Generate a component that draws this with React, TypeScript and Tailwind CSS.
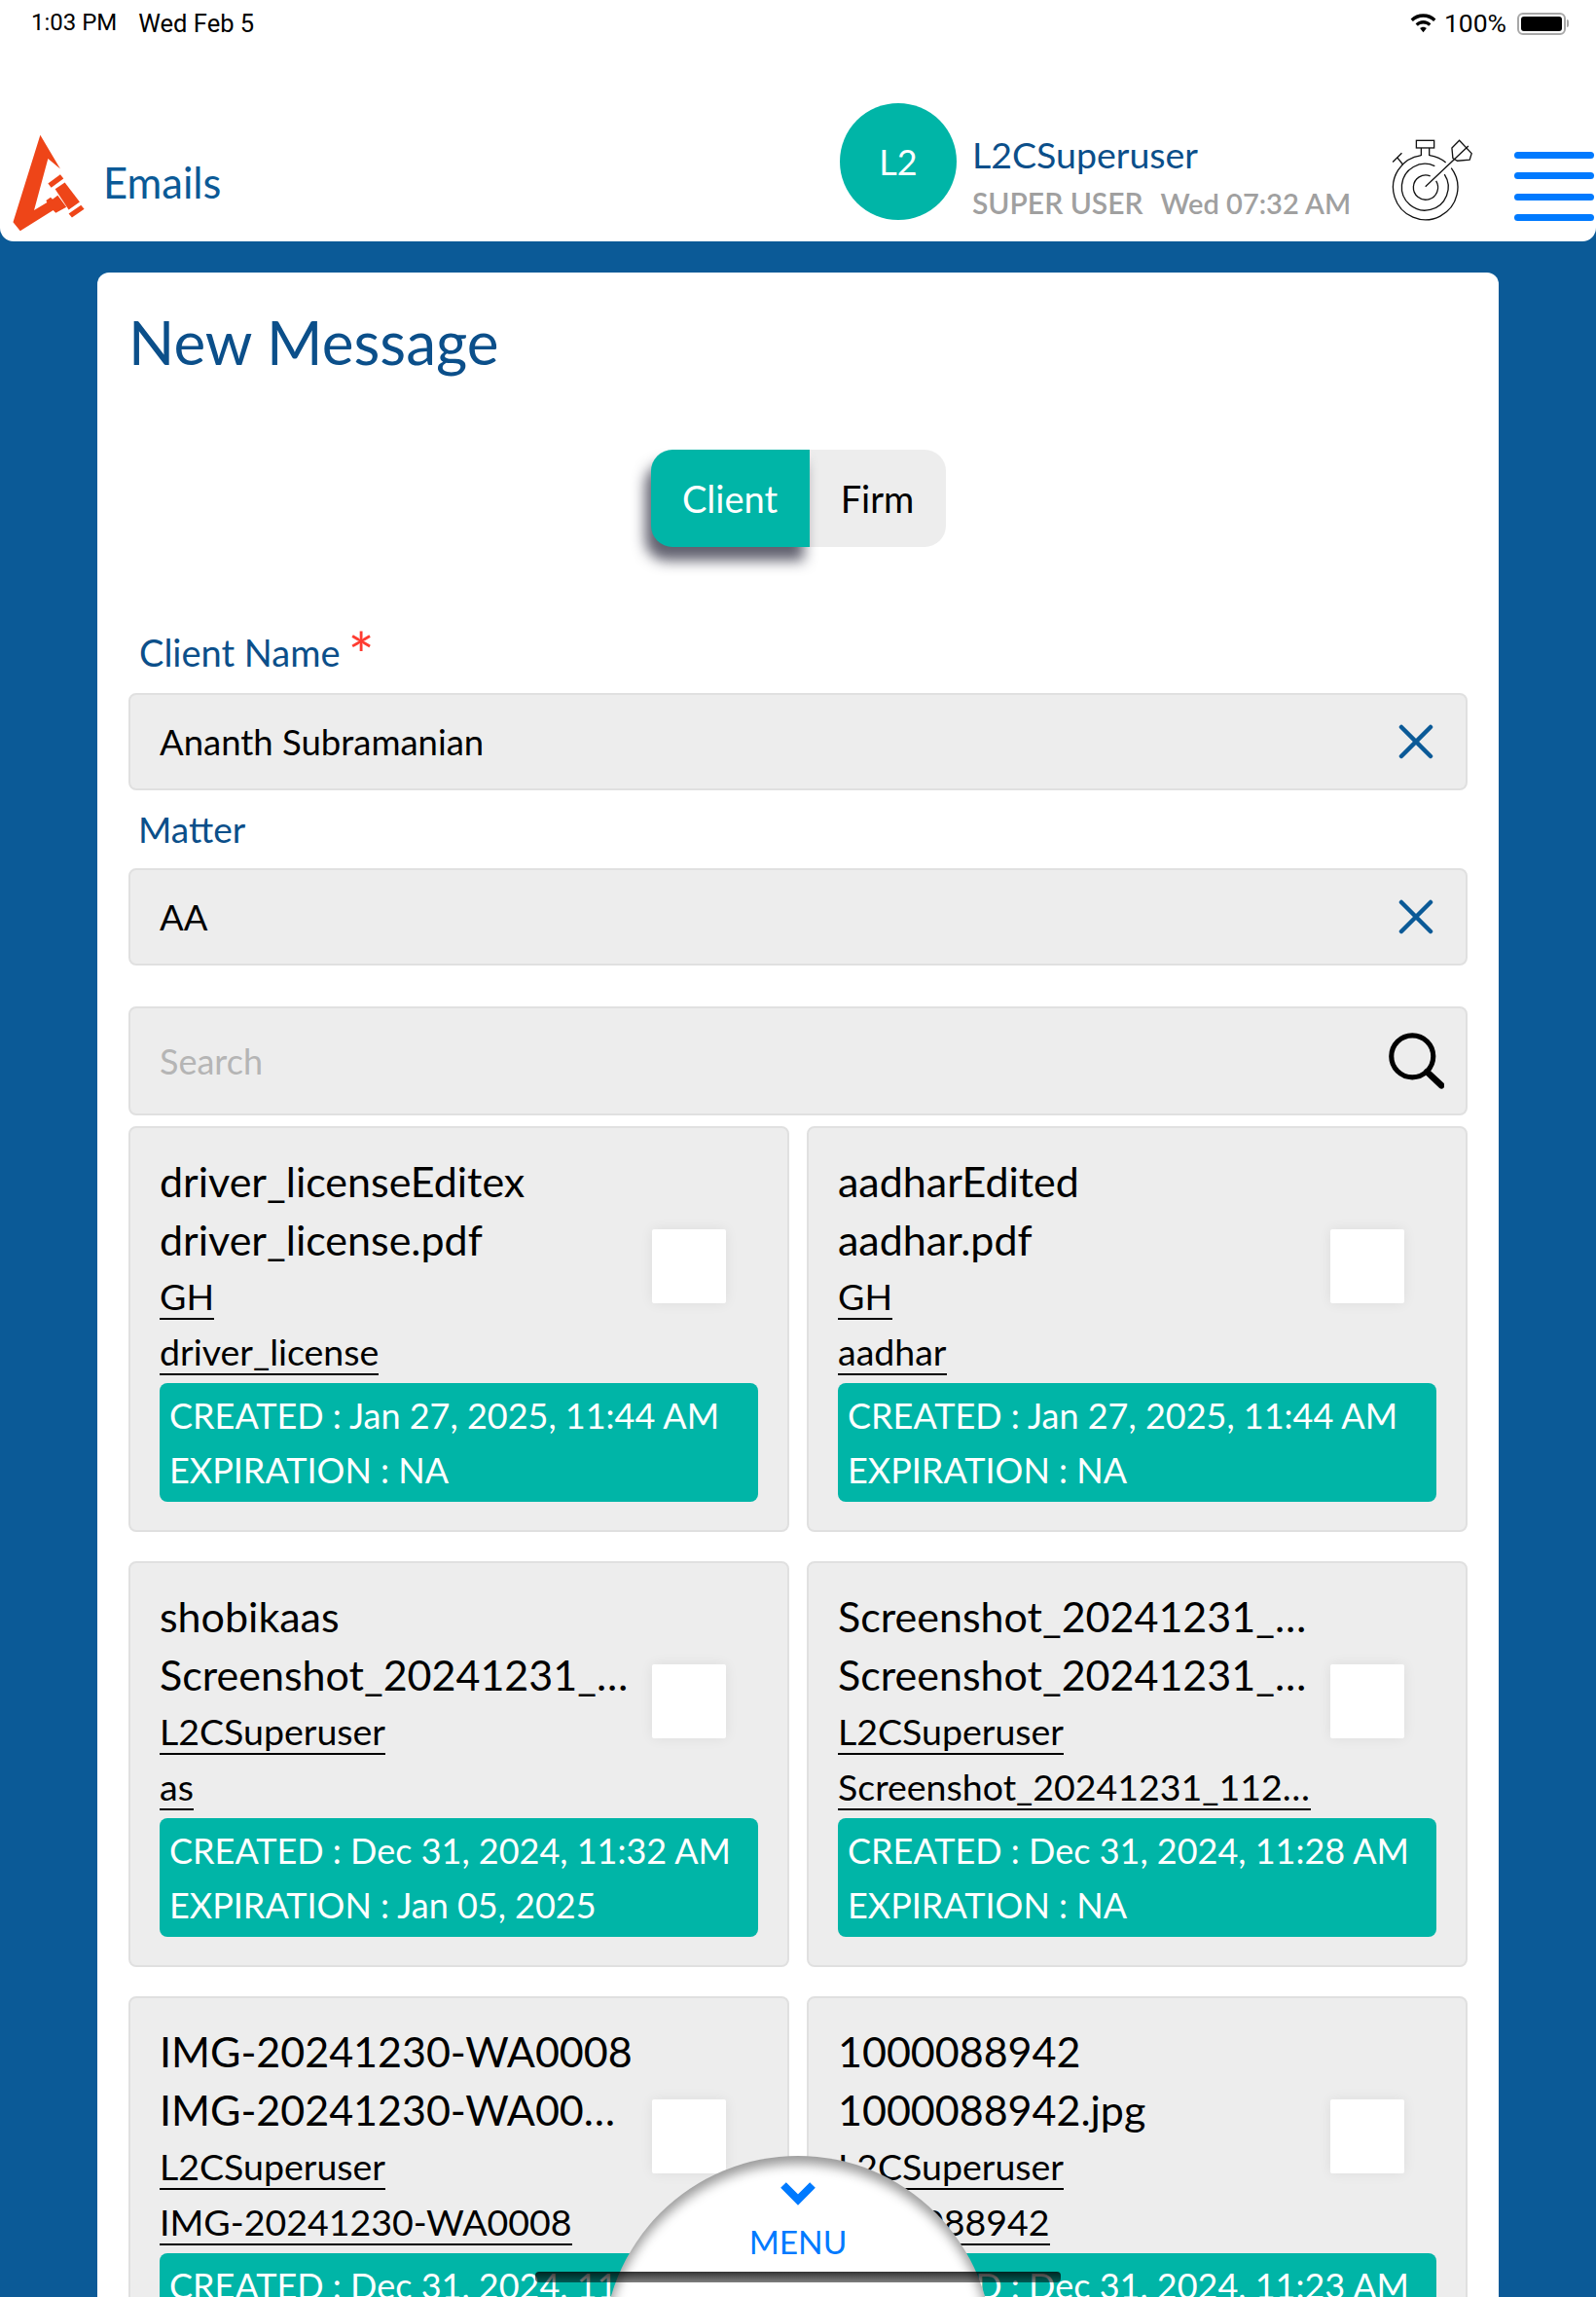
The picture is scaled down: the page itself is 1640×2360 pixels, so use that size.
import React from 'react';

const FONT = "font-['Lato','Noto_Sans',sans-serif]";

const FILES = [
  {
    title: 'driver_licenseEditex',
    file: 'driver_license.pdf',
    owner: 'GH',
    name: 'driver_license',
    created: 'Jan 27, 2025, 11:44 AM',
    expiration: 'NA',
  },
  {
    title: 'aadharEdited',
    file: 'aadhar.pdf',
    owner: 'GH',
    name: 'aadhar',
    created: 'Jan 27, 2025, 11:44 AM',
    expiration: 'NA',
  },
  {
    title: 'shobikaas',
    file: 'Screenshot_20241231_113205.jpg',
    owner: 'L2CSuperuser',
    name: 'as',
    created: 'Dec 31, 2024, 11:32 AM',
    expiration: 'Jan 05, 2025',
  },
  {
    title: 'Screenshot_20241231_112834',
    file: 'Screenshot_20241231_112834.jpg',
    owner: 'L2CSuperuser',
    name: 'Screenshot_20241231_112834',
    created: 'Dec 31, 2024, 11:28 AM',
    expiration: 'NA',
  },
  {
    title: 'IMG-20241230-WA0008',
    file: 'IMG-20241230-WA0008.jpg',
    owner: 'L2CSuperuser',
    name: 'IMG-20241230-WA0008',
    created: 'Dec 31, 2024, 11:24 AM',
    expiration: 'NA',
  },
  {
    title: '1000088942',
    file: '1000088942.jpg',
    owner: 'L2CSuperuser',
    name: '1000088942',
    created: 'Dec 31, 2024, 11:23 AM',
    expiration: 'NA',
  },
];

const ClearIcon = () => (
  <svg width="36" height="36" viewBox="0 0 36 36" fill="none" stroke="#0b5a97" strokeWidth="4.5" strokeLinecap="round">
    <path d="M3 3L33 33M33 3L3 33" />
  </svg>
);

const Logo = () => (
  <svg width="80" height="103" viewBox="30 50 240 310" fill="#ee4518">
    <path d="M124 55L186 160L148 128L105 288L145 264L142 258L156 248L162 254L178 242L205 278L172 296L164 288L62 352L40 325Z" />
    <path d="M148 205L186 177L196 190L158 218Z" />
    <path d="M170 222L200 202L246 262L212 286Z" />
    <path d="M212 298L250 272L260 284L222 310Z" />
  </svg>
);

const TargetIcon = () => (
  <svg width="90" height="88" viewBox="50 35 270 265" fill="none" stroke="#111" strokeWidth="4">
    <path d="M243 130A100 100 0 1 1 150 91" />
    <path d="M176 91A100 100 0 0 1 226 113" />
    <path d="M222 150A72 72 0 1 1 192 124" />
    <path d="M196 170A38 38 0 1 1 178 155" />
    <path d="M163 188L296 62" />
    <rect x="135" y="45" width="55" height="23" />
    <path d="M150 68V92M175 68V92" />
    <path d="M62 112L90 84M76 98L94 120" />
    <path d="M268 45L245 68L248 100L262 108L300 105L306 85Z" />
  </svg>
);

const StatusBar = () => (
  <div className="flex h-[60px] items-center justify-between pb-[12px] pl-[32px] pr-[28px] font-['Roboto',sans-serif] text-[24px] text-black">
    <div className="flex gap-[22px]">
      <span>1:03 PM</span>
      <span className="text-[25.5px]">Wed Feb 5</span>
    </div>
    <div className="flex items-center gap-[8px]">
      <svg width="27" height="20" viewBox="0 0 28 20" fill="black">
        <path d="M14 0C8.8 0 4 2 .6 5.4L3 8C5.8 5.2 9.7 3.5 14 3.5S22.2 5.2 25 8L27.4 5.4C24 2 19.2 0 14 0Z" />
        <path d="M14 7C10.8 7 7.9 8.3 5.8 10.4L8.2 12.9C9.7 11.4 11.7 10.5 14 10.5S18.3 11.4 19.8 12.9L22.2 10.4C20.1 8.3 17.2 7 14 7Z" />
        <path d="M14 13.8C12.6 13.8 11.4 14.4 10.5 15.3L14 19.5L17.5 15.3C16.6 14.4 15.4 13.8 14 13.8Z" />
      </svg>
      <span className="mr-[3px] text-[26.5px]">100%</span>
      <div className="flex items-center gap-[1px]">
        <div className="flex h-[23px] w-[50px] items-center justify-center rounded-[6px] border-2 border-[#a8a8a8]">
          <div className="h-[15px] w-[42px] rounded-[3px] bg-black" />
        </div>
        <div className="h-[8px] w-[2px] rounded-r-full bg-[#a8a8a8]" />
      </div>
    </div>
  </div>
);

const Header = () => (
  <div className="rounded-b-[14px] bg-white">
    <StatusBar />
    <div className="flex h-[188px] items-end">
      <div className="flex w-[863px] items-end pl-[10px]">
        <div className="mb-[8px]">
          <Logo />
        </div>
        <span className="mb-[33px] ml-[16px] text-[43.5px] leading-[56px] text-[#0b5a97]">Emails</span>
      </div>
      <div className="mb-[22px] flex h-[120px] w-[120px] items-center justify-center rounded-full bg-[#00b5a7] text-[36px] text-white">
        L2
      </div>
      <div className="mb-[17px] ml-[16px] w-[428px]">
        <div className="text-[37.5px] leading-[50px] text-[#0b4f8a]">L2CSuperuser</div>
        <div className="mt-[2px] flex items-baseline text-[30px] font-semibold leading-[44px] text-[#a0a0a0]">
          <span>SUPER USER</span>
          <span className="ml-[18px] text-[29px]">Wed 07:32 AM</span>
        </div>
      </div>
      <div className="mb-[19px]">
        <TargetIcon />
      </div>
      <div className="mb-[21px] ml-[39px] flex w-[82px] flex-col gap-[14.5px]">
        <div className="h-[7px] rounded-full bg-[#007aff]" />
        <div className="h-[7px] rounded-full bg-[#007aff]" />
        <div className="h-[7px] rounded-full bg-[#007aff]" />
        <div className="h-[7px] rounded-full bg-[#007aff]" />
      </div>
    </div>
  </div>
);

const Field = ({ value }: { value: string }) => (
  <div className="flex h-[100px] items-center justify-between rounded-lg border-2 border-[#e0e0e0] bg-[#ededed] pl-[30px] pr-[33px]">
    <span className="text-[36.5px] text-black">{value}</span>
    <ClearIcon />
  </div>
);

const FileCard = ({ item }: { item: (typeof FILES)[number] }) => (
  <div className="h-[417px] rounded-lg border-2 border-[#e0e0e0] bg-[#ededed] px-[30px] pt-[25px]">
    <div className="flex items-center gap-[20px]">
      <div className="w-[486px] text-black">
        <div className="truncate text-[43px] leading-[60px]">{item.title}</div>
        <div className="truncate text-[43px] leading-[60px]">{item.file}</div>
        <div className="h-[57px] pt-[6px]">
          <div className="w-fit max-w-full truncate border-b-2 border-black text-[37.5px] leading-[44px]">{item.owner}</div>
        </div>
        <div className="h-[57px] pt-[6px]">
          <div className="w-fit max-w-full truncate border-b-2 border-black text-[37.5px] leading-[44px]">{item.name}</div>
        </div>
      </div>
      <div className="h-[76px] w-[76px] shrink-0 rounded-[2px] bg-white shadow-[0_0_14px_rgba(0,0,0,0.07)]" />
    </div>
    <div className="mt-[3px] h-[122px] rounded-lg bg-[#00b5a7] px-[10px] pt-[5px] text-[36px] leading-[56px] text-white">
      <div className="truncate">CREATED : {item.created}</div>
      <div className="truncate">EXPIRATION : {item.expiration}</div>
    </div>
  </div>
);

const MenuTab = () => (
  <div className="absolute left-[620px] top-[2215px] flex h-[400px] w-[400px] flex-col items-center rounded-full bg-white pt-[26px] shadow-[inset_0_8px_12px_rgba(0,0,0,0.4)]">
    <svg width="36" height="25" viewBox="0 0 36 25" fill="none" stroke="#007aff" strokeWidth="8">
      <path d="M3 4L18 19L33 4" />
    </svg>
    <span className="mt-[15px] text-[33.5px] leading-[44px] text-[#007aff]">MENU</span>
  </div>
);

const App: React.FC = () => {
  return (
    <div className={`relative h-[2360px] overflow-hidden bg-[#0b5a97] ${FONT}`}>
      <Header />

      <div className="mx-[100px] mt-[32px] rounded-t-[12px] bg-white px-[32px] pt-[31px]">
        <h1 className="text-[62px] font-normal leading-[80px] text-[#0b4f8a]">New Message</h1>

        {/* Client / Firm switch */}
        <div className="mt-[71px] flex justify-center text-[38px]">
          <div className="relative z-10 flex h-[100px] w-[163px] items-center justify-center rounded-l-[22px] bg-[#00b5a7] text-white shadow-[-6px_14px_14px_rgba(30,30,50,0.7)]">
            Client
          </div>
          <div className="flex h-[100px] w-[140px] items-center justify-center rounded-r-[22px] bg-[#ededed] text-black">
            Firm
          </div>
        </div>

        <div className="mt-[78px] h-[60px] pl-[11px] text-[38px] leading-[60px] text-[#0b4f8a]">
          Client Name
          <span className="relative top-[12px] ml-[8px] text-[64px] leading-[0] text-[#ff3b30]">*</span>
        </div>
        <div className="mt-[12px]">
          <Field value="Ananth Subramanian" />
        </div>

        <div className="mt-[10px] h-[60px] pl-[10px] text-[37px] leading-[60px] text-[#0b4f8a]">Matter</div>
        <div className="mt-[10px]">
          <Field value="AA" />
        </div>

        <div className="mt-[42px] flex h-[112px] items-center justify-between rounded-lg border-2 border-[#e0e0e0] bg-[#ededed] pl-[30px] pr-[22px]">
          <span className="text-[36px] text-[#b5b5b5]">Search</span>
          <svg width="58" height="58" viewBox="0 0 62 62" fill="none" stroke="black" strokeWidth="5.5" strokeLinecap="round">
            <circle cx="27" cy="26" r="23" />
            <path d="M43 43L59 58" strokeWidth="7" />
          </svg>
        </div>

        <div className="mt-[11px] grid grid-cols-2 gap-x-[18px] gap-y-[30px]">
          {FILES.map((item) => (
            <FileCard key={item.title} item={item} />
          ))}
        </div>
      </div>

      <MenuTab />

      {/* home indicator */}
      <div className="absolute left-[550px] top-[2334px] h-[11px] w-[540px] rounded-[4px] bg-linear-to-b from-black/80 to-black/50" />
    </div>
  );
};

export default App;
